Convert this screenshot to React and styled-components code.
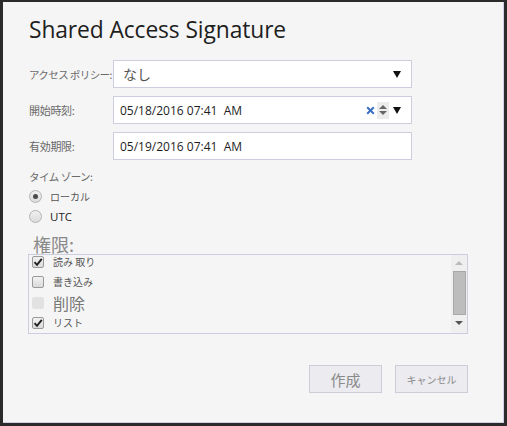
import React from "react";
import styled, { createGlobalStyle } from "styled-components";

const Global = createGlobalStyle`
    html, body {
        margin: 0;
        padding: 0;
        background: #2b2b2b;
    }
    body {
        font-family: "Open Sans", "Noto Sans CJK JP", sans-serif;
    }
`;

const jp = `"Noto Sans CJK JP", "Open Sans", sans-serif`;

const Dialog = styled.div`
    box-sizing: border-box;
    width: 501px;
    height: 421px;
    margin: 2px 0 0 3px;
    background: #f5f5f5;
    border-right: 1px solid #cfcfe6;
    border-bottom: 1px solid #cfcfe6;
    padding: 11px 0 0 26px;
    position: relative;
`;

const Title = styled.h1`
    margin: 0 0 14px 0;
    font-family: "Open Sans", sans-serif;
    font-weight: 400;
    font-size: 22.8px;
    line-height: 33px;
    color: #1e1e1e;
    letter-spacing: -0.1px;
`;

const Form = styled.div`
    display: grid;
    grid-template-columns: 84px 299px;
    row-gap: 8px;
    align-items: center;
`;

const Label = styled.div`
    font-family: ${jp};
    font-size: ${(p) => (p.tight ? "10.5px" : "11px")};
    color: #6a6a6a;
    letter-spacing: ${(p) => (p.tight ? "-0.6px" : "-0.3px")};
    white-space: nowrap;
`;

const Field = styled.div`
    box-sizing: border-box;
    height: 28px;
    background: #fff;
    border: 1px solid #cdcde0;
    display: flex;
    align-items: center;
    padding: 0 8px 0 ${(p) => (p.select ? "9px" : "6px")};
    font-family: ${(p) => (p.select ? jp : `"Open Sans", sans-serif`)};
    font-size: ${(p) => (p.select ? "14px" : "12px")};
    color: ${(p) => (p.select ? "#555" : "#1e1e1e")};
`;

const FieldText = styled.span`
    flex: 1;
`;

const Arrow = styled.span`
    width: 0;
    height: 0;
    border-left: 4px solid transparent;
    border-right: 4px solid transparent;
    border-top: 7px solid #111;
    margin-left: 4px;
    margin-right: 2px;
`;

const Spinner = styled.span`
    width: 12px;
    height: 17px;
    background: #ececec;
    display: flex;
    flex-direction: column;
    align-items: center;
    justify-content: center;
    gap: 2px;
    margin-left: 1px;
`;

const Caret = styled.span`
    width: 0;
    height: 0;
    border-left: 4px solid transparent;
    border-right: 4px solid transparent;
    ${(p) => (p.up ? "border-bottom: 4px solid #666;" : "border-top: 4px solid #666;")}
`;

const Section = styled.div`
    margin-top: 9px;
    font-family: ${jp};
    font-size: 10.5px;
    color: #6a6a6a;
    letter-spacing: -0.5px;
`;

const RadioRow = styled.label`
    display: flex;
    align-items: center;
    height: 20px;
    margin-top: ${(p) => (p.first ? "2px" : "0")};
    font-family: ${(p) => (p.latin ? `"Open Sans", sans-serif` : jp)};
    font-size: ${(p) => (p.latin ? "11.5px" : "10px")};
    color: ${(p) => (p.latin ? "#1e1e1e" : "#555")};
`;

const Radio = styled.span`
    box-sizing: border-box;
    width: 13px;
    height: 13px;
    border-radius: 50%;
    border: 1px solid #b4b4b4;
    background: linear-gradient(#f0f0f0, #dcdcdc);
    display: flex;
    align-items: center;
    justify-content: center;
    margin: 0 8px 0 0;
    &::after {
        content: "";
        width: 5px;
        height: 5px;
        border-radius: 50%;
        background: ${(p) => (p.checked ? "#4a4a4a" : "transparent")};
    }
`;

const PermTitle = styled.div`
    margin: 8px 0 0 4px;
    height: 20px;
    font-family: ${jp};
    font-size: 18px;
    line-height: 20px;
    color: #8a8a8a;
`;

const ListBox = styled.div`
    box-sizing: border-box;
    width: 440px;
    height: 80px;
    margin-left: -1px;
    border: 1px solid #cdcde0;
    background: #f5f5f5;
    display: flex;
    overflow: hidden;
`;

const Items = styled.div`
    flex: 1;
    margin-top: -3px;
`;

const Item = styled.div`
    display: flex;
    align-items: center;
    height: 20.3px;
    padding-left: 3px;
    line-height: 1;
    font-family: ${jp};
    font-size: ${(p) => (p.big ? "16px" : "10px")};
    color: ${(p) => (p.big ? "#777" : "#555")};
`;

const Box = styled.span`
    box-sizing: border-box;
    width: 12px;
    height: 12px;
    border-radius: 2px;
    border: 1px solid ${(p) => (p.disabled ? "#e2e2e2" : "#9a9a9a")};
    background: ${(p) => (p.disabled ? "#e2e2e2" : "linear-gradient(#f2f2f2, #dadada)")};
    margin-right: 9px;
    display: flex;
    align-items: center;
    justify-content: center;
`;

const Scrollbar = styled.div`
    width: 16px;
    background: #efefef;
    display: flex;
    flex-direction: column;
    align-items: center;
`;

const ScrollArrow = styled.span`
    height: 16px;
    display: flex;
    align-items: center;
    justify-content: center;
    &::after {
        content: "";
        border-left: 4px solid transparent;
        border-right: 4px solid transparent;
        ${(p) => (p.up ? "border-bottom: 4px solid #bbb;" : "border-top: 4px solid #555;")}
    }
`;

const Thumb = styled.div`
    box-sizing: border-box;
    width: 13px;
    height: 44px;
    background: #bdbdbd;
    border: 1px solid #a8a8a8;
`;

const Buttons = styled.div`
    display: flex;
    gap: 13px;
    margin: 31px 0 0 280px;
`;

const Button = styled.button`
    box-sizing: border-box;
    width: 73px;
    height: 28px;
    background: #ebebf0;
    border: 1px solid #cdcdd9;
    font-family: ${jp};
    font-size: ${(p) => (p.small ? "10px" : "15px")};
    color: #8a8a8a;
    padding: 0;
`;

function Check() {
    return (
        <svg width="10" height="10" viewBox="0 0 10 10">
            <path d="M1.5 5.2 L4 7.8 L8.8 1.8" fill="none" stroke="#222" strokeWidth="1.9" />
        </svg>
    );
}

function Clear() {
    return (
        <svg width="9" height="9" viewBox="0 0 9 9" style={{ marginRight: 1 }}>
            <path d="M1.2 1.2 L7.8 7.8 M7.8 1.2 L1.2 7.8" stroke="#3a6fc4" strokeWidth="2" />
        </svg>
    );
}

export default function App() {
    return (
        <>
            <Global />
            <Dialog>
                <Title>Shared Access Signature</Title>
                <Form>
                    <Label tight>アクセス ポリシー:</Label>
                    <Field select>
                        <FieldText>なし</FieldText>
                        <Arrow />
                    </Field>
                    <Label>開始時刻:</Label>
                    <Field>
                        <FieldText>05/18/2016 07:41&nbsp; AM</FieldText>
                        <Clear />
                        <Spinner>
                            <Caret up />
                            <Caret />
                        </Spinner>
                        <Arrow />
                    </Field>
                    <Label>有効期限:</Label>
                    <Field>
                        <FieldText>05/19/2016 07:41&nbsp; AM</FieldText>
                    </Field>
                </Form>
                <Section>タイム ゾーン:</Section>
                <RadioRow first>
                    <Radio checked />
                    ローカル
                </RadioRow>
                <RadioRow latin>
                    <Radio />
                    UTC
                </RadioRow>
                <PermTitle>権限:</PermTitle>
                <ListBox>
                    <Items>
                        <Item>
                            <Box><Check /></Box>読み 取り
                        </Item>
                        <Item>
                            <Box />書き込み
                        </Item>
                        <Item big>
                            <Box disabled />削除
                        </Item>
                        <Item>
                            <Box><Check /></Box>リスト
                        </Item>
                    </Items>
                    <Scrollbar>
                        <ScrollArrow up />
                        <Thumb />
                        <ScrollArrow />
                    </Scrollbar>
                </ListBox>
                <Buttons>
                    <Button>作成</Button>
                    <Button small>キャンセル</Button>
                </Buttons>
            </Dialog>
        </>
    );
}
